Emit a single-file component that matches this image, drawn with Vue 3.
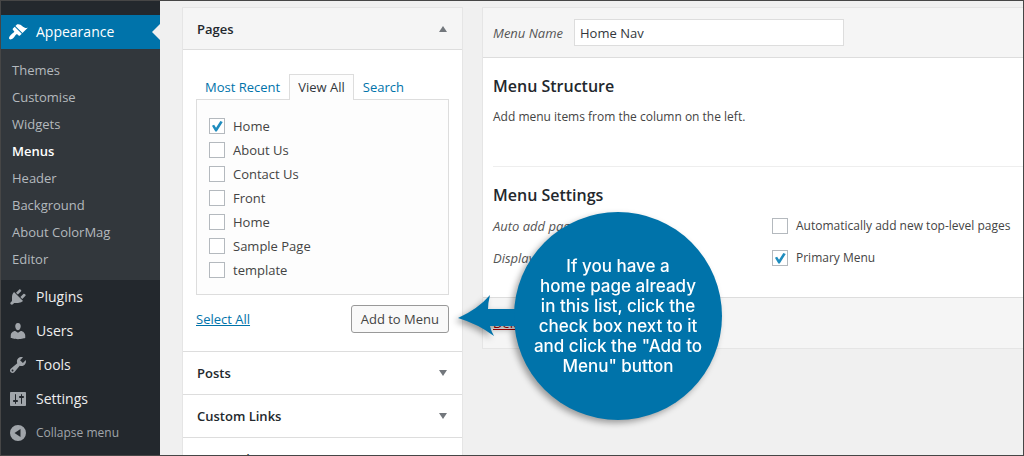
<script setup>
import { ref } from 'vue'

const subItems = ['Themes', 'Customise', 'Widgets', 'Menus', 'Header', 'Background', 'About ColorMag', 'Editor']

const mainItems = [
  {
    label: 'Plugins',
    d: 'M13.11 4.36L9.87 7.6 8 5.73l3.24-3.24c.35-.34 1.05-.2 1.56.32.52.51.66 1.21.31 1.55zm-8 1.77l.91-1.12 9.01 9.01-1.19.84c-.71.71-2.63 1.16-3.82 1.16H6.14L4.9 17.26c-.59.59-1.54.59-2.12 0-.59-.58-.59-1.53 0-2.12L4 13.88v-3.84c0-1.19.4-3.2 1.11-3.91zm7.26 3.97l3.24-3.24c.34-.35 1.04-.21 1.55.31.52.51.66 1.21.31 1.55l-3.24 3.25z'
  },
  {
    label: 'Users',
    d: 'M10 9.25c-2.27 0-2.73-3.44-2.73-3.44C7 4.02 7.82 2 9.97 2c2.16 0 2.98 2.02 2.71 3.81 0 0-.41 3.44-2.68 3.44zm0 2.57L12.72 10c2.39 0 4.52 2.33 4.52 4.53v2.49s-3.65 1.13-7.24 1.13c-3.65 0-7.24-1.13-7.24-1.13v-2.49c0-2.25 1.94-4.48 4.47-4.48z'
  },
  {
    label: 'Tools',
    d: 'M16.68 9.77c-1.34 1.34-3.3 1.67-4.95.99l-5.41 6.52c-.99.99-2.59.99-3.58 0s-.99-2.59 0-3.57l6.52-5.42c-.68-1.65-.35-3.61.99-4.95 1.28-1.28 3.12-1.62 4.72-1.06l-2.89 2.89 2.82 2.82 2.86-2.87c.53 1.58.18 3.39-1.08 4.65zM3.81 16.21c.4.39 1.04.39 1.43 0 .4-.4.4-1.04 0-1.43-.39-.4-1.03-.4-1.43 0-.39.39-.39 1.03 0 1.43z'
  },
  {
    label: 'Settings',
    d: 'M18 16V4c0-.55-.45-1-1-1H3c-.55 0-1 .45-1 1v12c0 .55.45 1 1 1h14c.55 0 1-.45 1-1zM8 11h1c.55 0 1 .45 1 1s-.45 1-1 1H8v1.5c0 .28-.22.5-.5.5s-.5-.22-.5-.5V13H6c-.55 0-1-.45-1-1s.45-1 1-1h1V5.5c0-.28.22-.5.5-.5s.5.22.5.5V11zm5-2h-1c-.55 0-1-.45-1-1s.45-1 1-1h1V5.5c0-.28.22-.5.5-.5s.5.22.5.5V7h1c.55 0 1 .45 1 1s-.45 1-1 1h-1v5.5c0 .28-.22.5-.5.5s-.5-.22-.5-.5V9z'
  }
]

const pages = ref([
  { label: 'Home', checked: true },
  { label: 'About Us', checked: false },
  { label: 'Contact Us', checked: false },
  { label: 'Front', checked: false },
  { label: 'Home', checked: false },
  { label: 'Sample Page', checked: false },
  { label: 'template', checked: false }
])

const closedSections = ['Posts', 'Custom Links', 'Categories']
const menuName = ref('Home Nav')
const autoAdd = ref(false)
const primary = ref(true)

const tipLines = [
  'If you have a',
  'home page already',
  'in this list, click the',
  'check box next to it',
  'and click the "Add to',
  'Menu" button'
]
</script>

<template>
  <div class="shell">
    <nav class="sidebar">
      <a class="item current" href="#">
        <svg viewBox="0 0 20 20"><path d="M14.48 11.06L7.41 3.99l1.5-1.5c.5-.56 2.3-.47 3.51.32 1.21.8 1.43 1.28 2.91 2.1 1.18.64 2.45 1.26 4.45.85zm-.71.71L6.7 4.7 4.93 6.47c-.39.39-.39 1.02 0 1.41l1.06 1.06c.39.39.39 1.03 0 1.42-.6.6-1.43 1.11-2.21 1.69-.35.26-.7.53-1.01.84C1.43 14.23.4 16.08 1.4 17.07c.99 1 2.84-.03 4.18-1.36.31-.31.58-.66.85-1.02.57-.78 1.08-1.61 1.69-2.21.39-.39 1.02-.39 1.41 0l1.06 1.06c.39.39 1.02.39 1.41 0z" /></svg>
        <span>Appearance</span>
      </a>
      <ul class="submenu">
        <li v-for="s in subItems" :key="s">
          <a href="#" :class="{ active: s === 'Menus' }">{{ s }}</a>
        </li>
      </ul>
      <a v-for="m in mainItems" :key="m.label" class="item" href="#">
        <svg viewBox="0 0 20 20"><path :d="m.d" /></svg>
        <span>{{ m.label }}</span>
      </a>
      <button class="item collapse" type="button">
        <svg viewBox="0 0 20 20"><path fill-rule="evenodd" d="M10 2a8 8 0 1 0 0 16 8 8 0 0 0 0-16zM12.5 6v8L6.5 10z" /></svg>
        <span>Collapse menu</span>
      </button>
    </nav>

    <section class="sources">
      <button class="section-head open" type="button">
        <span>Pages</span>
        <svg class="caret" viewBox="0 0 8 6"><path d="M4 0L8 6H0z" /></svg>
      </button>
      <div class="section-body">
        <div class="tabs">
          <a href="#">Most Recent</a>
          <a href="#" class="active">View All</a>
          <a href="#">Search</a>
        </div>
        <div class="page-list">
          <label v-for="(p, i) in pages" :key="i" class="check">
            <input v-model="p.checked" type="checkbox">
            <span>{{ p.label }}</span>
          </label>
        </div>
        <div class="actions">
          <a href="#">Select All</a>
          <button type="button">Add to Menu</button>
        </div>
      </div>
      <button v-for="c in closedSections" :key="c" class="section-head" type="button">
        <span>{{ c }}</span>
        <svg class="caret" viewBox="0 0 8 6"><path d="M0 0H8L4 6z" /></svg>
      </button>
    </section>

    <main class="editor">
      <header class="editor-head">
        <label for="menu-name">Menu Name</label>
        <input id="menu-name" v-model="menuName" type="text">
      </header>
      <div class="editor-body">
        <h3>Menu Structure</h3>
        <p>Add menu items from the column on the left.</p>
        <div class="settings">
          <h3>Menu Settings</h3>
          <div class="setting">
            <em>Auto add pages</em>
            <label class="check">
              <input v-model="autoAdd" type="checkbox">
              <span>Automatically add new top-level pages</span>
            </label>
          </div>
          <div class="setting">
            <em>Display location</em>
            <label class="check">
              <input v-model="primary" type="checkbox">
              <span>Primary Menu</span>
            </label>
          </div>
        </div>
      </div>
      <footer class="editor-foot">
        <a href="#">Delete Menu</a>
      </footer>
    </main>

    <aside class="tip">
      <svg class="arrow" viewBox="0 0 64 42"><path d="M0 23Q20 14 32 0Q30 8 30 14H64V31H32Q33 36 36 41Q20 29 0 23z" /></svg>
      <div class="bubble">
        <span v-for="l in tipLines" :key="l">{{ l }}</span>
      </div>
    </aside>
  </div>
</template>

<style>
body {
  margin: 0;
  background: #f0f0f0;
}
</style>

<style scoped>
.shell {
  position: relative;
  display: flex;
  align-items: flex-start;
  box-sizing: border-box;
  height: 100vh;
  overflow: hidden;
  border: 1px solid #464646;
  background: #f0f0f0;
  color: #444;
  font: 13px/20px "Open Sans", "Noto Sans", sans-serif;
}

a {
  color: #0073aa;
}

button,
input {
  font: inherit;
  color: inherit;
}

.sidebar {
  flex: none;
  align-self: stretch;
  box-sizing: border-box;
  width: 159px;
  padding-top: 14px;
  background: #23282d;
}

.item {
  position: relative;
  display: flex;
  align-items: center;
  gap: 8px;
  box-sizing: border-box;
  width: 100%;
  height: 34px;
  padding: 0 7px;
  border: 0;
  background: none;
  color: #eee;
  font-size: 14px;
  text-decoration: none;
}

.item svg {
  width: 20px;
  height: 20px;
  fill: #a0a5aa;
}

.item.current {
  background: #0073aa;
  color: #fff;
}

.item.current svg {
  fill: #fff;
}

.item.current::after {
  content: "";
  position: absolute;
  right: 0;
  top: 9px;
  border: 8px solid transparent;
  border-left: 0;
  border-right-color: #f0f0f0;
}

.item.collapse {
  color: #a0a5aa;
  font-size: 12px;
}

.submenu {
  margin: 0;
  padding: 8px 0 7px;
  list-style: none;
  background: #32373c;
}

.submenu a {
  display: block;
  padding: 0 11px;
  color: #b4b9be;
  line-height: 27px;
  text-decoration: none;
}

.submenu a.active {
  color: #fff;
  font-weight: 600;
}

.sources {
  flex: none;
  box-sizing: border-box;
  width: 281px;
  margin: 6px 0 0 22px;
  border: 1px solid #e5e5e5;
  background: #fff;
}

.section-head {
  display: flex;
  align-items: center;
  justify-content: space-between;
  box-sizing: border-box;
  width: 100%;
  height: 43px;
  padding: 0 15px 0 14px;
  border: 0;
  border-bottom: 1px solid #ddd;
  background: #fff;
  color: #23282d;
  font-size: 13px;
  font-weight: 600;
}

.section-head.open {
  height: 42px;
  background: #f5f5f5;
}

.caret {
  width: 8px;
  height: 6px;
  fill: #72777c;
}

.section-body {
  padding: 24px 13px 18px;
  border-bottom: 1px solid #ddd;
}

.tabs {
  display: flex;
}

.tabs a {
  padding: 2px 8px;
  border: 1px solid transparent;
  border-bottom: 0;
  text-decoration: none;
}

.tabs a.active {
  position: relative;
  z-index: 1;
  margin-bottom: -1px;
  padding-bottom: 3px;
  border-color: #ddd;
  background: #fdfdfd;
  color: #32373c;
}

.page-list {
  padding: 14px 12px 12px;
  border: 1px solid #ddd;
  background: #fdfdfd;
}

.check {
  display: flex;
  align-items: center;
  gap: 8px;
  white-space: nowrap;
}

.page-list .check {
  height: 24px;
}

.check input {
  appearance: none;
  flex: none;
  display: grid;
  place-items: center;
  box-sizing: border-box;
  width: 16px;
  height: 16px;
  margin: 0;
  border: 1px solid #b4b9be;
  background: #fff;
}

.check input:checked::before {
  content: "";
  width: 12px;
  height: 12px;
  background: #1e8cbe;
  clip-path: polygon(8% 48%, 26% 40%, 42% 64%, 78% 8%, 98% 16%, 48% 96%, 36% 96%);
}

.actions {
  display: flex;
  align-items: center;
  justify-content: space-between;
  margin-top: 10px;
}

.actions button {
  height: 28px;
  padding: 0 9px;
  border: 1px solid #999;
  border-radius: 3px;
  background: #f9f9f9;
}

.editor {
  flex: 1;
  min-width: 0;
  margin: 6px 0 0 19px;
  border: 1px solid #e5e5e5;
  border-right: 0;
  background: #fff;
}

.editor-head {
  display: flex;
  align-items: center;
  gap: 11px;
  height: 49px;
  padding: 0 10px;
  border-bottom: 1px solid #ddd;
  background: #f5f5f5;
}

.editor-head label,
em {
  color: #555;
  font-style: italic;
}

.editor-head input {
  box-sizing: border-box;
  width: 270px;
  height: 27px;
  padding: 0 5px;
  border: 1px solid #ddd;
  background: #fff;
  color: #32373c;
}

.editor-body {
  padding: 16px 0 23px 10px;
}

h3 {
  margin: 0;
  color: #23282d;
  font-size: 16px;
  font-weight: 600;
  line-height: 24px;
}

p {
  margin: 9px 0 39px;
}

p,
.setting .check {
  font-size: 12px;
}

.settings {
  padding-top: 16px;
  border-top: 1px solid #eee;
}

.settings h3 {
  margin-bottom: 3px;
}

.setting {
  display: grid;
  grid-template-columns: 279px 1fr;
  align-items: center;
  height: 32px;
}

.editor-foot {
  padding: 15px 10px;
  border-top: 1px solid #ddd;
  background: #f5f5f5;
}

.editor-foot a {
  color: #a00;
}

.tip {
  position: absolute;
  left: 457px;
  top: 211px;
  display: flex;
  align-items: center;
  filter: drop-shadow(-3px 3px 3px rgba(0, 0, 0, 0.35));
}

.arrow {
  width: 64px;
  height: 42px;
  margin-right: -8px;
  fill: #0073aa;
}

.bubble {
  display: flex;
  flex-direction: column;
  align-items: center;
  justify-content: center;
  width: 208px;
  height: 208px;
  border-radius: 50%;
  background: #0073aa;
  color: #fff;
  font: 500 17px/20px Inter, "Open Sans", sans-serif;
  white-space: nowrap;
}
</style>
